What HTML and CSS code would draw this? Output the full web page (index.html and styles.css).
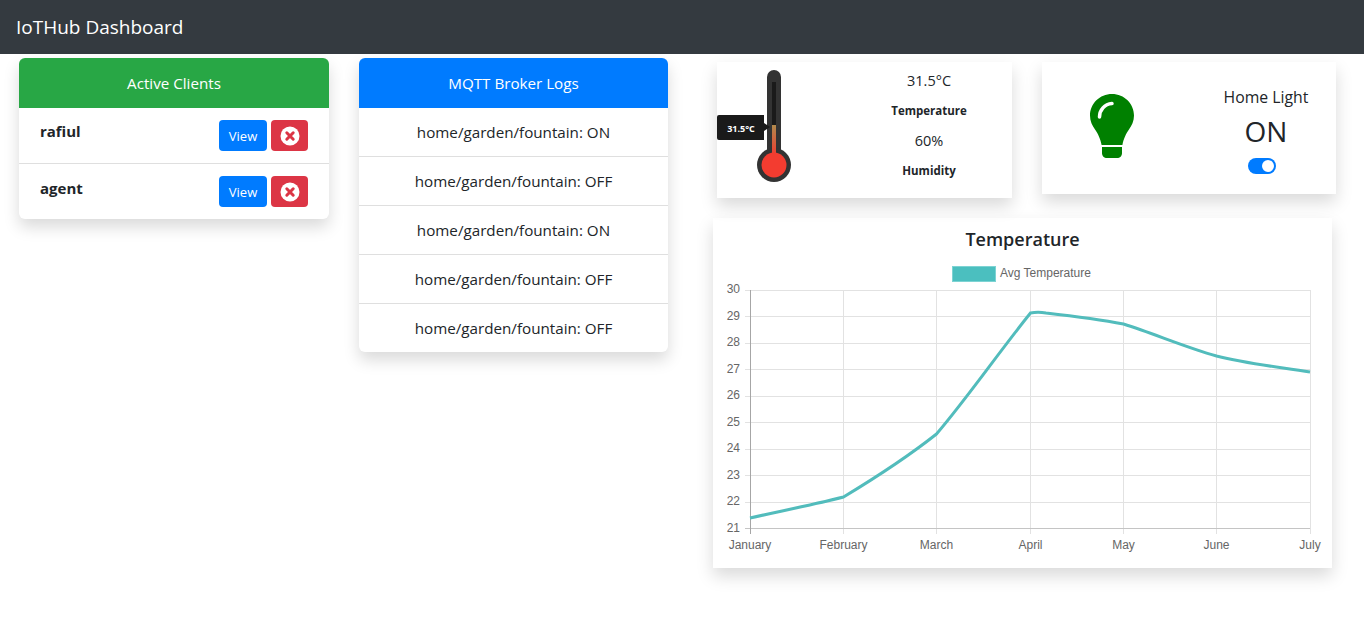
FILE: index.html
```html
<!DOCTYPE html>
<html lang="en">
<head>
  <meta charset="UTF-8">
  <meta name="viewport" content="width=device-width, initial-scale=1.0">
  <title>IoTHub Dashboard</title>
  <link rel="stylesheet" href="styles.css">
</head>
<body>
  <nav class="navbar">IoTHub Dashboard</nav>

  <main class="dashboard">
    <!-- Active clients -->
    <section class="card clients">
      <div class="card-header header-green">Active Clients</div>
      <div class="client-row">
        <b class="client-name">rafiul</b>
        <div class="client-actions">
          <button class="btn btn-view">View</button>
          <button class="btn btn-delete">
            <svg width="20" height="20" viewBox="0 0 20 20"><circle cx="10" cy="10" r="9.5" fill="#fff"/><path d="M6.8 6.8l6.4 6.4M13.2 6.8l-6.4 6.4" stroke="#dc3545" stroke-width="3" stroke-linecap="round"/></svg>
          </button>
        </div>
      </div>
      <div class="client-row">
        <b class="client-name">agent</b>
        <div class="client-actions">
          <button class="btn btn-view">View</button>
          <button class="btn btn-delete">
            <svg width="20" height="20" viewBox="0 0 20 20"><circle cx="10" cy="10" r="9.5" fill="#fff"/><path d="M6.8 6.8l6.4 6.4M13.2 6.8l-6.4 6.4" stroke="#dc3545" stroke-width="3" stroke-linecap="round"/></svg>
          </button>
        </div>
      </div>
    </section>

    <!-- Broker logs -->
    <section class="card logs">
      <div class="card-header header-blue">MQTT Broker Logs</div>
      <div class="log-row">home/garden/fountain: ON</div>
      <div class="log-row">home/garden/fountain: OFF</div>
      <div class="log-row">home/garden/fountain: ON</div>
      <div class="log-row">home/garden/fountain: OFF</div>
      <div class="log-row">home/garden/fountain: OFF</div>
    </section>

    <div class="right-col">
      <div class="widgets">
        <section class="widget weather">
          <svg class="thermometer" width="80" height="136" viewBox="0 0 80 136">
            <defs>
              <linearGradient id="mercury" x1="0" y1="0" x2="0" y2="1">
                <stop offset="0" stop-color="#b08a4c"/>
                <stop offset="1" stop-color="#f03c30"/>
              </linearGradient>
            </defs>
            <rect x="50" y="8" width="14" height="100" rx="7" fill="#333"/>
            <circle cx="57" cy="103" r="17" fill="#333"/>
            <rect x="55" y="20" width="4" height="70" fill="#1a1a1a"/>
            <rect x="55" y="63" width="4" height="30" fill="url(#mercury)"/>
            <circle cx="57" cy="103" r="12.5" fill="#f33c30"/>
            <path d="M2 53h45v8l6 4-6 4v9H2a2 2 0 0 1-2-2V55a2 2 0 0 1 2-2z" fill="#1a1a1a"/>
            <text x="24" y="69.500" class="thermo-label">31.5°C</text>
          </svg>
          <div class="weather-values">
            <div class="value">31.5°C</div>
            <b class="label">Temperature</b>
            <div class="value">60%</div>
            <b class="label">Humidity</b>
          </div>
        </section>

        <section class="widget light">
          <svg class="bulb" width="44" height="64" viewBox="0 0 44 64">
            <path d="M22 0C9.8 0 0 9.6 0 21.6c0 5.800 2.200 10.200 5.200 14.200 2.600 3.400 5.300 9.300 6.400 15.200h20.800c1.100-5.900 3.800-11.800 6.400-15.200 3-4 5.200-8.400 5.200-14.200C44 9.600 34.200 0 22 0z" fill="#008000"/>
            <path d="M12 53h20v6c0 3-2 5-5 5H17c-3 0-5-2-5-5z" fill="#008000"/>
            <path d="M9.500 23c0-7 5-13 12.500-13.500" fill="none" stroke="#fff" stroke-width="3.500" stroke-linecap="round"/>
          </svg>
          <div class="light-info">
            <div class="light-name">Home Light</div>
            <div class="light-state">ON</div>
            <div class="switch"><span class="knob"></span></div>
          </div>
        </section>
      </div>

      <section class="widget chart-card">
        <h5 class="chart-title">Temperature</h5>
        <svg class="chart" width="619" height="306" viewBox="713 262 619 306">
          <rect x="952.500" y="266.500" width="43" height="15" fill="#4bbfbf" stroke="#7dd3d3"/>
          <text x="1000" y="277" class="legend">Avg Temperature</text>

          <g class="grid">
            <path d="M750 290.500H1310M750 316.500H1310M750 343.500H1310M750 369.500H1310M750 396.500H1310M750 422.500H1310M750 449.500H1310M750 475.500H1310M750 502.500H1310"/>
            <path d="M843.500 290V534M936.500 290V534M1030.500 290V534M1123.500 290V534M1216.500 290V534M1310.500 290V534"/>
            <path d="M745 290.500H750M745 316.500H750M745 343.500H750M745 369.500H750M745 396.500H750M745 422.500H750M745 449.500H750M745 475.500H750M745 502.500H750"/>
          </g>
          <path class="axis" d="M745 528.500H1310"/>
          <path class="axis axis-y" d="M750.500 290V534"/>

          <g class="ticks-y">
            <text x="740" y="293">30</text>
            <text x="740" y="320">29</text>
            <text x="740" y="346">28</text>
            <text x="740" y="373">27</text>
            <text x="740" y="399">26</text>
            <text x="740" y="426">25</text>
            <text x="740" y="452">24</text>
            <text x="740" y="479">23</text>
            <text x="740" y="505">22</text>
            <text x="740" y="532">21</text>
          </g>
          <g class="ticks-x">
            <text x="750" y="549">January</text>
            <text x="843.500" y="549">February</text>
            <text x="936.500" y="549">March</text>
            <text x="1030.500" y="549">April</text>
            <text x="1123.500" y="549">May</text>
            <text x="1216.500" y="549">June</text>
            <text x="1310" y="549">July</text>
          </g>

          <path class="line" d="M750 518C781 511 812 505 843.500 497C875 478 905 459 936.500 434C968 397 999 352 1030.500 313C1036 312 1040 312 1046 313C1072 316 1097 319 1123.500 324C1155 334 1185 347 1216.500 356C1248 364 1279 367 1310 372"/>
        </svg>
      </section>
    </div>
  </main>
</body>
</html>
```

FILE: styles.css
```css
* {
  box-sizing: border-box;
}

body {
  margin: 0;
  min-height: 100vh;
  background-color: #fff;
  color: #212529;
  font-family: "Open Sans", "Noto Sans", sans-serif;
  font-size: 15.2px;
}

.navbar {
  height: 54px;
  padding: 0 16px;
  display: flex;
  align-items: center;
  background-color: #343a40;
  color: #fff;
  font-size: 19px;
}

.dashboard {
  display: flex;
  align-items: flex-start;
  padding: 4px 0 0 19px;
}

/* cards */
.card {
  background-color: #fff;
  border-radius: 6px;
  box-shadow: 0 8px 16px rgba(0, 0, 0, 0.15);
  overflow: hidden;
}

.card-header {
  height: 50px;
  display: flex;
  align-items: center;
  justify-content: center;
  color: #fff;
}

.header-green {
  background-color: #28a745;
}

.header-blue {
  background-color: #007bff;
}

.clients {
  width: 310px;
}

.client-row {
  height: 56px;
  padding: 12px 21px;
  display: flex;
  align-items: flex-start;
  justify-content: space-between;
  border-bottom: 1px solid #dfdfdf;
}

.client-row:last-child {
  height: 55px;
  border-bottom: none;
}

.client-name {
  padding-top: 1px;
  font-size: 15px;
}

.client-row:last-child .client-name {
  padding-top: 2px;
}

.client-actions {
  display: flex;
  gap: 4px;
}

.btn {
  height: 31px;
  padding: 0;
  border: none;
  border-radius: 4px;
  color: #fff;
  font-family: inherit;
  font-size: 13px;
  display: flex;
  align-items: center;
  justify-content: center;
}

.btn-view {
  width: 48px;
  background-color: #007bff;
}

.btn-delete {
  width: 37px;
  background-color: #dc3545;
}

.logs {
  width: 309px;
  margin-left: 30px;
}

.log-row {
  height: 49px;
  display: flex;
  align-items: center;
  justify-content: center;
  border-bottom: 1px solid #dfdfdf;
}

.log-row:last-child {
  height: 48px;
  border-bottom: none;
}

/* right column */
.right-col {
  width: 623px;
  margin-left: 45px;
}

.widgets {
  display: flex;
  align-items: flex-start;
  gap: 30px;
  margin: 4px 0 20px 4px;
}

.widget {
  background-color: #fff;
  box-shadow: 0 8px 16px rgba(0, 0, 0, 0.15);
}

.weather {
  width: 295px;
  height: 136px;
  display: flex;
}

.thermometer {
  flex: none;
}

.thermo-label {
  fill: #fff;
  font-size: 9px;
  font-weight: 700;
  text-anchor: middle;
}

.weather-values {
  width: 134px;
  margin-left: 65px;
  display: flex;
  flex-direction: column;
  align-items: center;
  padding-top: 8px;
}

.value {
  height: 22px;
  line-height: 22px;
  font-size: 14.500px;
}

.label {
  height: 38px;
  padding-top: 11px;
  font-size: 11.500px;
}

.light {
  width: 294px;
  height: 132px;
  display: flex;
}

.bulb {
  flex: none;
  margin: 32px 0 0 48px;
}

.light-info {
  width: 120px;
  margin-left: 72px;
  padding-top: 24px;
  display: flex;
  flex-direction: column;
  align-items: center;
}

.light-name {
  height: 22px;
  line-height: 22px;
  font-size: 15.800px;
}

.light-state {
  height: 46px;
  line-height: 46px;
  font-size: 28px;
}

.switch {
  width: 28px;
  height: 16px;
  margin: 4px 8px 0 0;
  padding: 2px;
  display: flex;
  justify-content: flex-end;
  border-radius: 8px;
  background-color: #007bff;
}

.knob {
  width: 12px;
  height: 12px;
  border-radius: 50%;
  background-color: #fff;
}

/* chart */
.chart-card {
  width: 619px;
  height: 350px;
}

.chart-title {
  height: 42px;
  margin: 0 0 2px;
  display: flex;
  align-items: center;
  justify-content: center;
  font-size: 18px;
  font-weight: 600;
}

.chart {
  display: block;
}

.chart text {
  font-family: "Liberation Sans", Arial, sans-serif;
  font-size: 12px;
  fill: #666;
}

.grid path {
  fill: none;
  stroke: #e2e2e2;
  stroke-width: 1;
}

.axis {
  fill: none;
  stroke: #c4c4c4;
  stroke-width: 1;
}

.axis-y {
  stroke: #a6a6a6;
}

.ticks-y text {
  text-anchor: end;
}

.ticks-x text {
  text-anchor: middle;
}

.line {
  fill: none;
  stroke: #52bcbc;
  stroke-width: 3;
}
```
